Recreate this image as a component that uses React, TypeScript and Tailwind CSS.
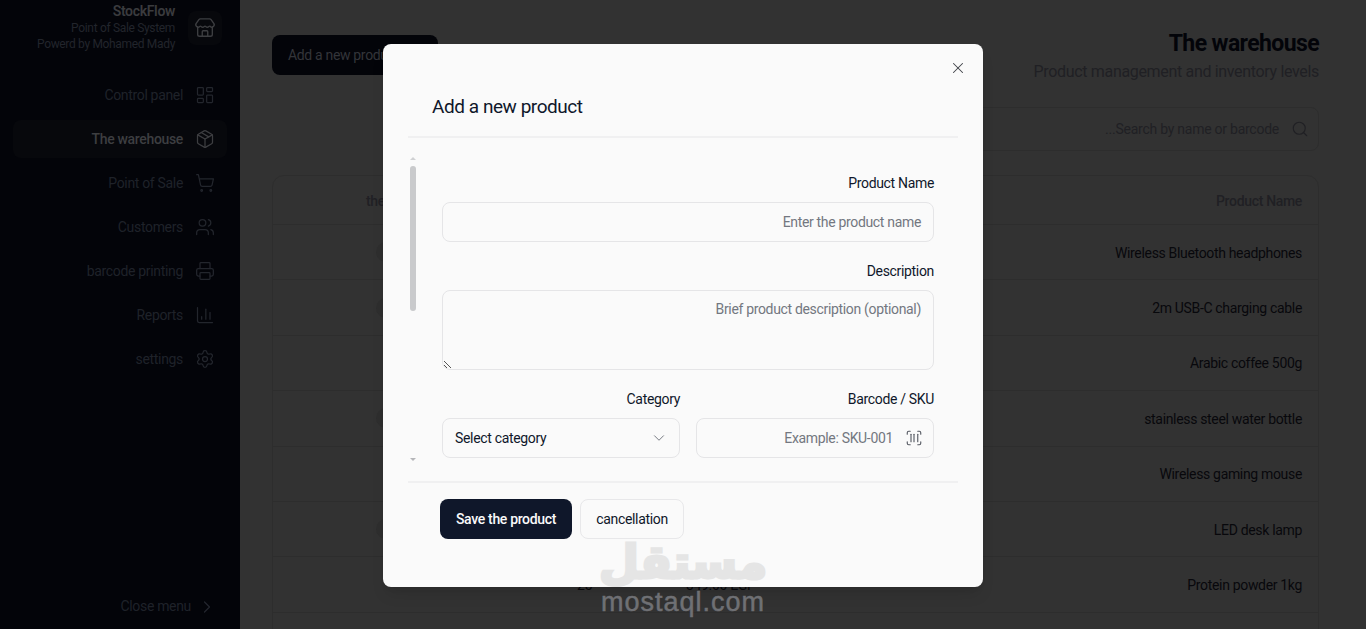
import { BarChart3, ChevronDown, ChevronRight, LayoutDashboard, Package, Printer, ScanBarcode, Search, Settings, ShoppingCart, Store, Users, X } from "lucide-react";

const navItems = [
  { label: "Control panel", icon: LayoutDashboard },
  { label: "The warehouse", icon: Package, active: true },
  { label: "Point of Sale", icon: ShoppingCart },
  { label: "Customers", icon: Users },
  { label: "barcode printing", icon: Printer },
  { label: "Reports", icon: BarChart3 },
  { label: "settings", icon: Settings },
];

const products = [
  { name: "Wireless Bluetooth headphones", badge: "w-[20px]" },
  { name: "2m USB-C charging cable", badge: "w-[20px]" },
  { name: "Arabic coffee 500g", badge: "w-0" },
  { name: "stainless steel water bottle", badge: "w-[20px]" },
  { name: "Wireless gaming mouse", badge: "w-0" },
  { name: "LED desk lamp", badge: "w-[20px]" },
  { name: "Protein powder 1kg", badge: "w-0", price: "349.00 EGP", stock: "25" },
];

const Sidebar = () => (
  <aside className="flex h-[629px] w-[240px] shrink-0 flex-col bg-[#030409]">
    <div className="flex h-[55px] items-center justify-end gap-[13px] pr-[18px]">
      <div className="text-right">
        <p className="text-[14px] leading-[17px] font-semibold text-[#3a3b3e]">StockFlow</p>
        <p className="text-[12px] leading-[16px] text-[#22252c]">Point of Sale System</p>
        <p className="text-[12px] leading-[16px] text-[#22252c]">Powerd by Mohamed Mady</p>
      </div>
      <div className="flex h-[34px] w-[34px] items-center justify-center rounded-lg bg-[#07080c]">
        <Store className="h-[22px] w-[22px] text-[#3d3e41]" strokeWidth={1.5} />
      </div>
    </div>
    <nav className="mt-[21px] flex flex-col gap-[6px] px-[13px]">
      {navItems.map((item) => (
        <div key={item.label} className={`flex h-[38px] items-center justify-end gap-3 rounded-lg pr-[12px] text-[14px] ${item.active ? "bg-[#07080c] font-medium text-[#3d3e41]" : "text-[#1f2229]"}`}>
          <span>{item.label}</span>
          <item.icon className={`h-5 w-5 ${item.active ? "text-[#3d3e41]" : "text-[#23262d]"}`} strokeWidth={1.5} />
        </div>
      ))}
    </nav>
    <div className="mt-auto mb-[12px] flex items-center justify-end gap-[6px] pr-[23px] text-[14px] text-[#1f2229]">
      <span>Close menu</span>
      <ChevronRight className="h-5 w-5 text-[#23262d]" strokeWidth={1.5} />
    </div>
  </aside>
);

const Warehouse = () => (
  <main className="h-[629px] min-w-0 flex-1 overflow-hidden bg-[#323232] pt-[29px] pr-[47px] pl-[32px]">
    <div className="flex items-start justify-between">
      <button className="mt-[6px] h-[40px] w-[166px] rounded-lg bg-[#030409] pl-4 text-left text-[14px] text-[#33353a]">Add a new product</button>
      <div className="text-right">
        <h1 className="text-[23px] leading-[30px] font-bold tracking-[-0.6px] text-[#030409]">The warehouse</h1>
        <p className="mt-[1px] text-[16px] leading-[24px] text-[#202024]">Product management and inventory levels</p>
      </div>
    </div>
    <div className="mt-[23px] ml-auto flex h-[44px] w-[420px] items-center justify-end gap-3 rounded-lg border border-[#2d2d2d] pr-[9px] text-[14px] tracking-[-0.25px] text-[#202024]">
      <span>...Search by name or barcode</span>
      <Search className="h-[18px] w-[18px]" strokeWidth={1.5} />
    </div>
    <div className="mt-[24px] rounded-xl border border-[#2d2d2d]">
      <div className="flex h-[49px] items-center justify-between border-b border-[#2d2d2d] pt-[2px] pr-[16px] pl-[93px] text-[14px] font-medium text-[#202024]">
        <span>the</span>
        <span>Product Name</span>
      </div>
      {products.map((product) => (
        <div key={product.name} className="flex h-[55.4px] items-center border-b border-[#2d2d2d] pr-[16px] text-[14px] text-[#08080c]">
          <span className={`ml-[103px] h-[20px] rounded-full bg-[#2e2e2e] ${product.badge}`} />
          {product.stock && <span className="mt-[2px] ml-[201px] w-[20px]">{product.stock}</span>}
          {product.price && <span className="mt-[2px] ml-[89px]">{product.price}</span>}
          <span className="mt-[2px] ml-auto">{product.name}</span>
        </div>
      ))}
      <div className="flex h-[55.4px] items-center">
        <span className="ml-[107px] h-[20px] w-[56px] rounded-full bg-[#2b2b2b]" />
      </div>
    </div>
  </main>
);

const ProductDialog = () => (
  <div className="absolute inset-0 flex items-start justify-center pt-[44px]">
    <section className="relative h-[543px] w-[600px] rounded-lg bg-[#fafafa] px-[25px] pt-[49px] shadow-lg">
      <X className="absolute top-[15px] right-[16px] h-[18px] w-[18px] text-[#3f4248]" strokeWidth={1.4} />
      <h2 className="pb-[15px] pl-6 text-[19px] leading-[28px] tracking-[-0.45px] text-[#0f172a]">Add a new product</h2>
      <div className="flex h-[347px] border-y-2 border-[#f0f0f1]">
        <div className="flex w-[34px] shrink-0 flex-col items-center pt-[19px] pr-[24px]">
          <span className="h-0 w-0 border-x-[3px] border-b-[3px] border-x-transparent border-b-[#d0d1d3]" />
          <span className="mt-[6px] h-[145px] w-[6px] rounded-full bg-[#c9cacc]" />
          <span className="mt-[147px] h-0 w-0 border-x-[3px] border-t-[3px] border-x-transparent border-t-[#b5b6b9]" />
        </div>
        <div className="flex-1 pt-[35px] pr-6">
          <label className="block text-right text-[14px] leading-[20px] text-[#0f172a]">Product Name</label>
          <div className="mt-[9px] flex h-[40px] items-center justify-end rounded-lg border border-[#e5e5e7] px-3 text-[14px] text-[#737780]">Enter the product name</div>
          <label className="mt-[19px] block text-right text-[14px] leading-[20px] text-[#0f172a]">Description</label>
          <div className="relative mt-[9px] h-[80px] rounded-lg border border-[#e5e5e7] px-3 pt-[8px] text-right text-[14px] leading-[20px] text-[#737780]">
            Brief product description (optional)
            <svg className="absolute bottom-0 left-0 h-[9px] w-[9px] text-[#555]" viewBox="0 0 9 9" fill="none" stroke="currentColor">
              <path d="M1 1l7 7M1 5l3 3" />
            </svg>
          </div>
          <div className="mt-[19px] grid grid-cols-2 gap-4">
            <div>
              <label className="block text-right text-[14px] leading-[20px] text-[#0f172a]">Category</label>
              <div className="mt-[9px] flex h-[40px] items-center justify-between rounded-lg border border-[#e5e5e7] pr-[11px] pl-3 text-[14px] text-[#0f172a]">
                <span>Select category</span>
                <ChevronDown className="h-[18px] w-[18px] text-[#737780]" strokeWidth={1.3} />
              </div>
            </div>
            <div>
              <label className="block text-right text-[14px] leading-[20px] text-[#0f172a]">Barcode / SKU</label>
              <div className="mt-[9px] flex h-[40px] items-center justify-end gap-3 rounded-lg border border-[#e5e5e7] pr-[10px] pl-3 text-[14px] text-[#737780]">
                <span>Example: SKU-001</span>
                <ScanBarcode className="h-[18px] w-[18px] text-[#555962]" strokeWidth={1.5} />
              </div>
            </div>
          </div>
        </div>
      </div>
      <div className="flex gap-2 pt-[16px] pl-[32px]">
        <button className="h-[40px] w-[132px] rounded-lg bg-[#0f172a] text-[14px] font-medium text-[#fafafa]">Save the product</button>
        <button className="h-[40px] w-[104px] rounded-lg border border-[#e8e8ea] text-[14px] text-[#0f172a]">cancellation</button>
      </div>
    </section>
  </div>
);

export default function App() {
  return (
    <div className="relative flex h-[629px] overflow-hidden font-['Roboto',sans-serif] tracking-[-0.33px]">
      <Sidebar />
      <Warehouse />
      <ProductDialog />
      <div className="absolute top-[533px] left-[600px] flex w-[166px] flex-col items-center tracking-normal">
        <span className="font-['DejaVu_Sans',sans-serif] text-[46px] leading-[58px] font-bold text-[#e5e5e5] [-webkit-text-stroke:3px_#e5e5e5]" dir="rtl">مستقل</span>
        <span className="font-['Liberation_Sans',sans-serif] text-[27px] leading-[22px] tracking-[1px] text-[#6f7074] [-webkit-text-stroke:0.5px_#6f7074]">mostaql.com</span>
      </div>
    </div>
  );
}
